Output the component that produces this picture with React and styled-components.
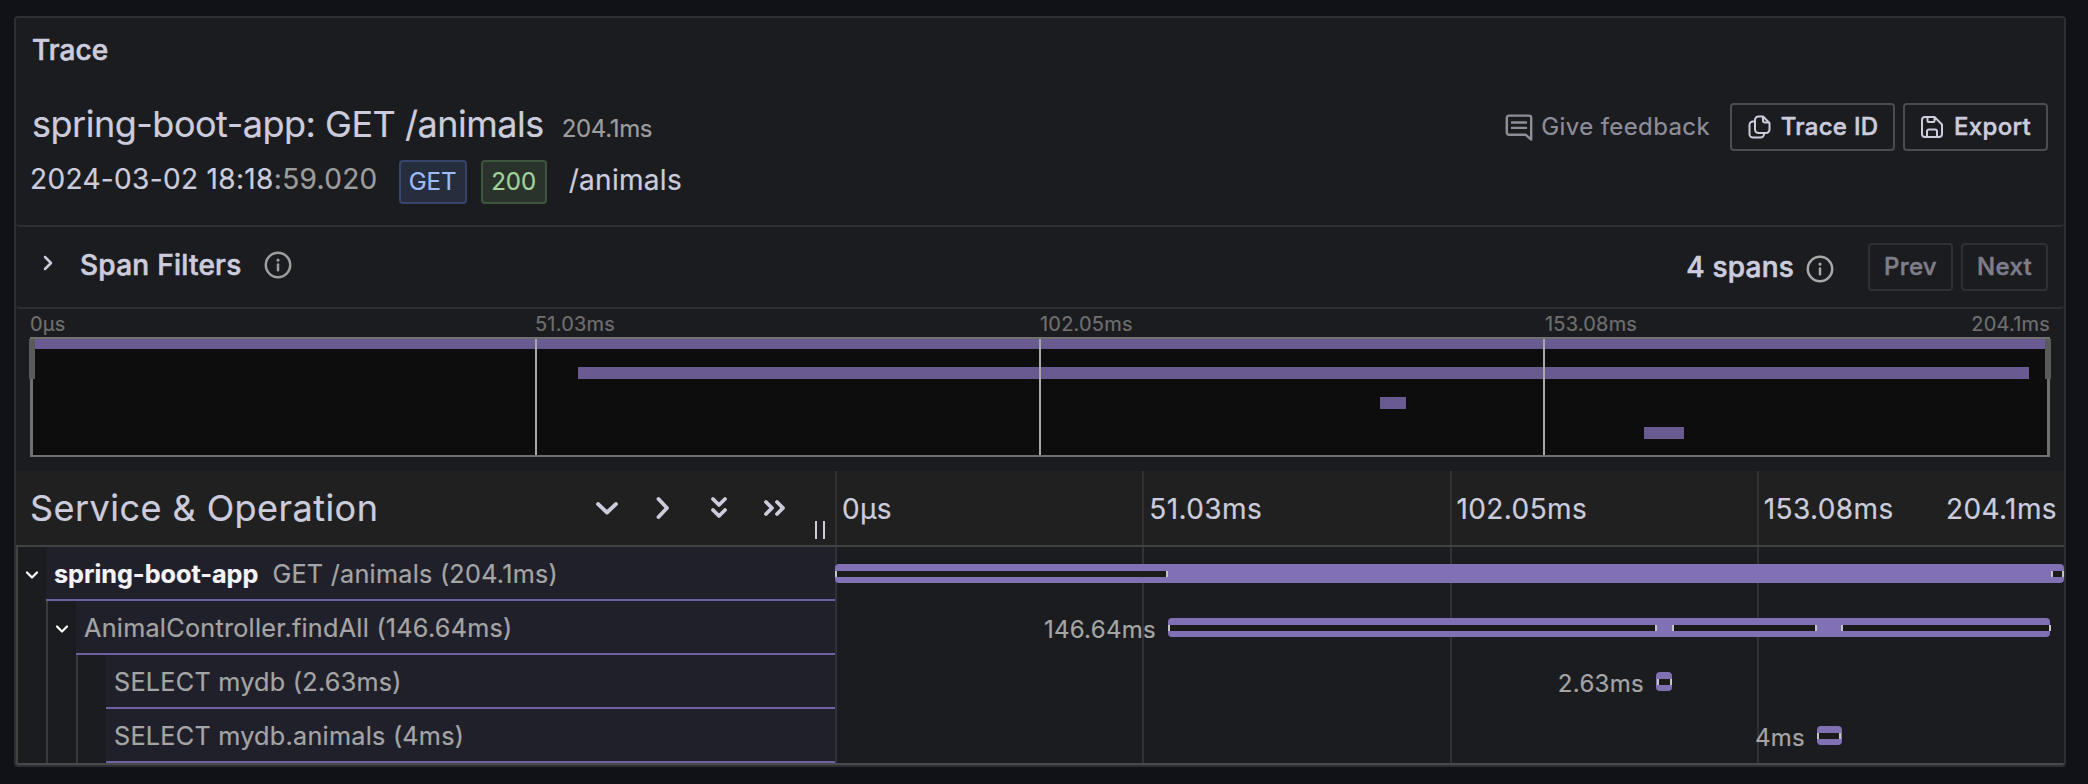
import React from "react";
import styled, { createGlobalStyle } from "styled-components";

const Global = createGlobalStyle`
  body { margin: 0; background: #111217; font-family: Inter, "Liberation Sans", sans-serif; color: #ccccdc; -webkit-text-stroke: 0.2px; }
  * { box-sizing: border-box; }
`;

const Page = styled.div`
  width: 2088px;
  height: 784px;
  padding: 16px 22px 17px 14px;
  background: #111217;
`;

const Panel = styled.section`
  height: 751px;
  border: 2px solid #2e2f34;
  border-radius: 4px;
  background: #1b1c20;
  overflow: hidden;
  display: flex;
  flex-direction: column;
`;

const TraceHeader = styled.header`
  height: 209px;
  flex: none;
  display: flex;
  justify-content: space-between;
  border-bottom: 2px solid #2e2f34;
  border-radius: 0 0 4px 4px;
  padding: 0 16px;
`;

const Text = styled.span`
  white-space: pre;
  font-size: ${(p) => p.$size || 28}px;
  line-height: ${(p) => p.$lh || 36}px;
  font-weight: ${(p) => p.$weight || 400};
  color: ${(p) => p.$color || "#ccccdc"};
  letter-spacing: ${(p) => p.$ls || 0}px;
  -webkit-text-stroke: ${(p) => (p.$weight === 500 ? 0.6 : 0.2)}px;
`;

const PanelTitle = styled.h2`
  margin: 14px 0 0;
  font-size: 28px;
  line-height: 36px;
  font-weight: 500;
  letter-spacing: 0.1px;
  -webkit-text-stroke: 0.6px;
`;

const TitleRow = styled.div`
  display: flex;
  align-items: baseline;
  gap: 18px;
  margin-top: 32px;
  height: 48px;
`;

const MetaRow = styled.div`
  display: flex;
  align-items: flex-start;
  margin-top: 12px;
  margin-left: -2px;
`;

const Timestamp = styled.div`
  display: flex;
  margin: 1px 21px 0 0;
`;

const Tag = styled.span`
  height: 44px;
  width: ${(p) => p.$w}px;
  text-align: center;
  line-height: 39px;
  margin-right: 14px;
  font-size: 24px;
  border-radius: 4px;
  border: 2px solid ${(p) => p.$border};
  background: ${(p) => p.$bg};
  color: ${(p) => p.$color};
`;

const UrlPath = styled(Text)`
  margin: 2px 0 0 8px;
`;

const Actions = styled.div`
  display: flex;
  height: 48px;
  margin-top: 85px;
  align-items: center;
  gap: 8px;
`;

const Feedback = styled.a`
  display: flex;
  align-items: center;
  gap: 8px;
  margin-right: 12px;
  color: #8e8e9b;
`;

const Button = styled.button`
  height: 48px;
  width: ${(p) => p.$w}px;
  display: flex;
  align-items: center;
  justify-content: center;
  gap: 10px;
  padding: 0;
  font: 500 24px/44px Inter, "Liberation Sans", sans-serif;
  letter-spacing: 0.3px;
  -webkit-text-stroke: 0.5px;
  border-radius: 4px;
  background: transparent;
  border: 2px solid ${(p) => (p.$dim ? "#2f3036" : "#4b4c54")};
  color: ${(p) => (p.$dim ? "#7e7e8a" : "#ccccdc")};
`;

const Filters = styled.div`
  height: 82px;
  flex: none;
  display: flex;
  align-items: center;
  border-bottom: 2px solid #2e2f34;
  border-radius: 0 0 4px 4px;
  padding: 0 16px 0 26px;
`;

const FilterTitle = styled.div`
  display: flex;
  align-items: center;
  gap: 22px;
  flex: 1;
  padding-bottom: 4px;
`;

const FilterToggle = styled.span`
  display: flex;
  padding-bottom: 4px;
  margin-right: 2px;
`;

const FilterNav = styled.div`
  display: flex;
  align-items: center;
  gap: 8px;
`;

const SpanCount = styled.div`
  display: flex;
  align-items: flex-start;
  gap: 12px;
  margin-right: 26px;
`;

const CountInfo = styled.span`
  display: flex;
  padding-top: 6px;
`;

const MapLabels = styled.div`
  display: grid;
  grid-template-columns: repeat(3, 505px) 1fr auto;
  height: 28px;
  padding: 2px 14px 0 14px;
  flex: none;
`;

const MapBox = styled.div`
  position: relative;
  height: 120px;
  margin: 0 14px;
  flex: none;
  border: solid #707070;
  border-width: 2px 3px;
  background: #0d0d0d;
`;

const MapBar = styled.i`
  position: absolute;
  background: #695b92;
`;

const MapTick = styled.i`
  position: absolute;
  top: 0;
  bottom: 0;
  width: 2px;
  background: #a8a8a8;
`;

const Handle = styled.i`
  position: absolute;
  top: 0;
  width: 6px;
  height: 40px;
  background: #5a5a5a;
  ${(p) => p.$side}: -4px;
`;

const TableHead = styled.div`
  display: flex;
  flex: none;
  margin-top: 14px;
  height: 76px;
  border-bottom: 2px solid #424242;
  background: #202020;
`;

const NameHead = styled.div`
  width: 819px;
  display: flex;
  align-items: center;
  padding: 0 10px 0 14px;
`;

const HeadTitle = styled.h3`
  margin: 0;
  flex: 1;
  font-size: 36px;
  line-height: 48px;
  font-weight: 400;
  letter-spacing: 0.45px;
`;

const Toggles = styled.div`
  display: flex;
  gap: 24px;
  margin-right: 24px;
`;

const Grip = styled.span`
  align-self: flex-end;
  width: 10px;
  height: 18px;
  margin-bottom: 6px;
  border: solid #ccccdc;
  border-width: 0 2px;
`;

const Scale = styled.div`
  flex: 1;
  display: grid;
  grid-template-columns: repeat(4, 1fr);
`;

const ScaleCell = styled.div`
  border-left: 2px solid #313131;
  display: flex;
  align-items: center;
  justify-content: space-between;
  padding: 2px 7px 0 5px;
`;

const Rows = styled.div`
  border-left: 2px solid #424242;
  border-bottom: 2px solid #4a4a4d;
  flex: none;
`;

const Row = styled.div`
  display: flex;
  height: 54px;
`;

const NameCell = styled.div`
  width: 817px;
  display: flex;
  flex: none;
`;

const Indent = styled.span`
  width: ${(p) => (p.$first ? 28 : 30)}px;
  border-left: ${(p) => (p.$first ? 0 : 2)}px solid #3a3a3a;
  display: flex;
  align-items: center;
  justify-content: center;
`;

const Operation = styled.div`
  flex: 1;
  display: flex;
  align-items: center;
  gap: 14px;
  padding: 1px 0 0 8px;
  background: #20202a;
  border-bottom: 2px solid #6f61a0;
`;

const TimeCell = styled.div`
  position: relative;
  flex: 1;
  display: grid;
  grid-template-columns: repeat(4, 1fr);
`;

const GridLine = styled.span`
  border-left: 2px solid #313235;
`;

const Bar = styled.div`
  position: absolute;
  top: 17px;
  height: 19px;
  border-radius: 4px;
  background: #8170b4;
`;

const SelfTime = styled.i`
  position: absolute;
  top: 7px;
  height: 6px;
  background: #1b1b1b;
  border: solid #c4c4c4;
  border-width: 0 2px;
`;

const BarLabel = styled.span`
  position: absolute;
  right: 100%;
  top: -7px;
  margin-right: 12px;
  font-size: 24px;
  line-height: 38px;
  letter-spacing: 0.3px;
  color: #a5a5a5;
`;

const Stroke = ({ d, w, h, vb, sw = 2, color = "currentColor", children }) => (
  <svg width={w} height={h} viewBox={vb} fill="none" stroke={color} strokeWidth={sw} strokeLinecap="round" strokeLinejoin="round">
    {d && <path d={d} />}
    {children}
  </svg>
);

const InfoIcon = ({ color = "#9d9d9d" }) => (
  <Stroke w={28} h={28} vb="0 0 28 28" sw={2.5} color={color}>
    <circle cx="14" cy="14" r="12.2" />
    <path d="M14 13.6v5.6" />
    <path d="M14 9.1v.2" strokeWidth="3" />
  </Stroke>
);

const MAP = [
  [2, 0, 2010, 10],
  [545, 28, 1451, 12],
  [1347, 58, 26, 12],
  [1611, 88, 40, 12],
];

const SPANS = [
  { depth: 0, service: "spring-boot-app", op: "GET /animals (204.1ms)", open: true, x: 0, w: 1229, self: [[0, 333], [1216, 13]] },
  { depth: 1, op: "AnimalController.findAll (146.64ms)", open: true, label: "146.64ms", x: 333, w: 882, self: [[0, 489], [504, 145], [673, 210]] },
  { depth: 2, op: "SELECT mydb (2.63ms)", label: "2.63ms", x: 821, w: 16, self: [[1, 15]] },
  { depth: 2, op: "SELECT mydb.animals (4ms)", label: "4ms", x: 982, w: 25, self: [[0, 24]] },
];

export default function App() {
  return (
    <Page>
      <Global />
      <Panel>
        <TraceHeader>
          <div>
            <PanelTitle>Trace</PanelTitle>
            <TitleRow>
              <Text $size={36} $lh={48} $ls={-0.49}>spring-boot-app: GET /animals</Text>
              <Text $size={24} $color="#9d9d9d" $ls={-0.33}>204.1ms</Text>
            </TitleRow>
            <MetaRow>
              <Timestamp>
                <Text $ls={0.34}>2024-03-02 18:18</Text>
                <Text $color="#9d9d9d" $ls={0.34}>:59.020</Text>
              </Timestamp>
              <Tag $w={68} $bg="#262d3d" $border="#36446e" $color="#9ebcf5">GET</Tag>
              <Tag $w={66} $bg="#29332b" $border="#3c573c" $color="#a3d39c">200</Tag>
              <UrlPath $ls={0.3}>/animals</UrlPath>
            </MetaRow>
          </div>
          <Actions>
            <Feedback>
              <Stroke w={28} h={28} vb="0 0 28 28" sw={2.4} d="M4 2.600h20a2.200 2.200 0 0 1 2.200 2.200V26.500L20.800 21.800H4a2.200 2.200 0 0 1-2.200-2.200V4.800A2.200 2.200 0 0 1 4 2.600zM7 9.500h14M7 14.900h14" />
              <Text $size={24} $color="#8e8e9b" $ls={0.39}>Give feedback</Text>
            </Feedback>
            <Button $w={165}>
              <Stroke w={24} h={24} vb="0 0 24 24" d="M16 1.500H11.500a3.500 3.500 0 0 0-3.500 3.500v9.500a3.500 3.500 0 0 0 3.500 3.500h7.500a3.500 3.500 0 0 0 3.500-3.500V8L16 1.500v4a2 2 0 0 0 2 2h4M8 6.500H6a3.500 3.500 0 0 0-3.500 3.500v9a3.500 3.500 0 0 0 3.500 3.500h7.500a3.500 3.500 0 0 0 3.500-3.500v-1" />
              Trace ID
            </Button>
            <Button $w={145}>
              <Stroke w={24} h={24} vb="0 0 24 24" d="M5 2h9.500l7.500 7.500V19a3 3 0 0 1-3 3H5a3 3 0 0 1-3-3V5a3 3 0 0 1 3-3zM7.500 2v4a1 1 0 0 0 1 1h5a1 1 0 0 0 1-1V2M7 22v-5.500a2 2 0 0 1 2-2h6a2 2 0 0 1 2 2v5.500" />
              Export
            </Button>
          </Actions>
        </TraceHeader>
        <Filters>
          <FilterTitle>
            <FilterToggle>
              <Stroke w={14} h={18} vb="0 0 14 18" sw={2.5} d="M3 3l6 6-6 6" />
            </FilterToggle>
            <Text $weight={500} $ls={0.25}>Span Filters</Text>
            <InfoIcon />
          </FilterTitle>
          <FilterNav>
            <SpanCount>
              <Text $weight={500} $ls={0.2}>4 spans</Text>
              <CountInfo><InfoIcon color="#a8a8a8" /></CountInfo>
            </SpanCount>
            <Button $w={85} $dim>Prev</Button>
            <Button $w={87} $dim>Next</Button>
          </FilterNav>
        </Filters>
        <MapLabels>
          {["0μs", "51.03ms", "102.05ms", "153.08ms", "204.1ms"].map((t) => (
            <Text key={t} $size={20} $lh={26} $color="#6f6f6f" $ls={0.2}>{t}</Text>
          ))}
        </MapLabels>
        <MapBox>
          {MAP.map(([left, top, width, height]) => (
            <MapBar key={top} style={{ left, top, width, height }} />
          ))}
          {[502, 1006, 1510].map((left) => <MapTick key={left} style={{ left }} />)}
          <Handle $side="left" />
          <Handle $side="right" />
        </MapBox>
        <TableHead>
          <NameHead>
            <HeadTitle>Service &amp; Operation</HeadTitle>
            <Toggles>
              <Stroke w={32} h={32} vb="0 0 32 32" sw={3.8} d="M7 12l9 8.500 9-8.500" />
              <Stroke w={32} h={32} vb="0 0 32 32" sw={3.8} d="M11.500 7l8.500 9-8.500 9" />
              <Stroke w={32} h={32} vb="0 0 32 32" sw={3.8} d="M10 7l6 6 6-6M10 18l6 6 6-6" />
              <Stroke w={32} h={32} vb="0 0 32 32" sw={3.8} d="M7 10l6 6-6 6M18 10l6 6-6 6" />
            </Toggles>
            <Grip />
          </NameHead>
          <Scale>
            <ScaleCell><Text $ls={0.4}>0μs</Text></ScaleCell>
            <ScaleCell><Text $ls={0.4}>51.03ms</Text></ScaleCell>
            <ScaleCell><Text $ls={0.4}>102.05ms</Text></ScaleCell>
            <ScaleCell><Text $ls={0.4}>153.08ms</Text><Text $ls={0.4}>204.1ms</Text></ScaleCell>
          </Scale>
        </TableHead>
        <Rows>
          {SPANS.map((s) => (
            <Row key={s.op}>
              <NameCell>
                {Array.from({ length: s.depth + 1 }, (_, i) => (
                  <Indent key={i} $first={i === 0}>
                    {s.open && i === s.depth && <Stroke w={16} h={16} vb="0 0 16 16" sw={2.2} color="#fff" d="M3 6.500l5 5 5-5" />}
                  </Indent>
                ))}
                <Operation>
                  {s.service && <Text $size={25.2} $weight={700} $color="#f4f4f6">{s.service}</Text>}
                  <Text $size={25.2} $color="#a5a5a5" $ls={0.26}>{s.op}</Text>
                </Operation>
              </NameCell>
              <TimeCell>
                {[0, 1, 2, 3].map((i) => <GridLine key={i} />)}
                <Bar style={{ left: s.x, width: s.w }}>
                  {s.self.map(([left, width]) => <SelfTime key={left} style={{ left, width }} />)}
                  {s.label && <BarLabel>{s.label}</BarLabel>}
                </Bar>
              </TimeCell>
            </Row>
          ))}
        </Rows>
      </Panel>
    </Page>
  );
}
